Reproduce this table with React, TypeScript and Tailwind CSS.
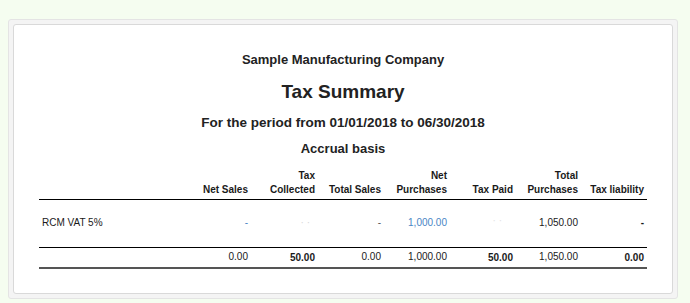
const cols = "grid grid-cols-[145px_67px_67px_66px_66px_66px_65px_66px]";

type Cell = { text: string; cls?: string };

function Row({ cells, className }: { cells: Cell[]; className: string }) {
  return (
    <div className={`${cols} ${className}`}>
      {cells.map((c, i) => (
        <div key={i} className={`${i === 0 ? "pl-[3px] text-left" : "pr-[3px] text-right"} ${c.cls ?? ""}`}>
          {c.text}
        </div>
      ))}
    </div>
  );
}

export default function App() {
  const body: Cell[] = [
    { text: "RCM VAT 5%" },
    { text: "-", cls: "text-[#4a86c5]" },
    { text: "· ·", cls: "text-[#d8d8d8] pr-[8px]" },
    { text: "-", cls: "text-[#555]" },
    { text: "1,000.00", cls: "text-[#4a86c5]" },
    { text: "· ·", cls: "text-[#e2e2e2] pr-[14px] -translate-y-[2px]" },
    { text: "1,050.00" },
    { text: "-", cls: "font-bold" },
  ];
  const totals: Cell[] = [
    { text: "" },
    { text: "0.00" },
    { text: "50.00", cls: "font-bold translate-y-[1px]" },
    { text: "0.00" },
    { text: "1,000.00" },
    { text: "50.00", cls: "font-bold translate-y-[1px]" },
    { text: "1,050.00" },
    { text: "0.00", cls: "font-bold translate-y-[1px]" },
  ];

  return (
    <div className="min-h-[303px] bg-[#f5fdf0] pt-[19px] pl-[8px] pr-[12px] font-['Liberation_Sans',Arial,sans-serif]">
      <div className="rounded-[3px] border border-[#e4e4e4] bg-[#f4f4f4] p-[4px]">
        <div className="rounded-[3px] border border-[#d9d9d9] bg-white px-[25px] pt-[27px] pb-[24px] text-[#222]">
          <div className="text-center">
            <div className="text-[13px] leading-[16px] font-bold">Sample Manufacturing Company</div>
            <div className="mt-[12px] text-[19px] leading-[24px] font-bold">Tax Summary</div>
            <div className="mt-[10px] text-[13.5px] leading-[18px] font-bold">
              For the period from 01/01/2018 to 06/30/2018
            </div>
            <div className="mt-[9px] text-[13px] leading-[16px] font-bold">Accrual basis</div>
          </div>

          <div className="mt-[12px] text-[10px] leading-[14px] text-[#1a1a1a]">
            <div className={`${cols} items-end border-b border-black pb-[2px] font-bold`}>
              <div />
              <div className="pr-[3px] text-right">Net Sales</div>
              <div className="pr-[3px] text-right">
                Tax
                <br />
                Collected
              </div>
              <div className="pr-[3px] text-right">Total Sales</div>
              <div className="pr-[3px] text-right">
                Net
                <br />
                Purchases
              </div>
              <div className="pr-[3px] text-right">Tax Paid</div>
              <div className="pr-[3px] text-right">
                Total
                <br />
                Purchases
              </div>
              <div className="pr-[3px] text-right">Tax liability</div>
            </div>
            <Row cells={body} className="pt-[16px] pb-[17px]" />
            <Row cells={totals} className="border-t border-black pt-[2px] pb-[3px] border-b-2 border-b-[#555]" />
          </div>
        </div>
      </div>
    </div>
  );
}
